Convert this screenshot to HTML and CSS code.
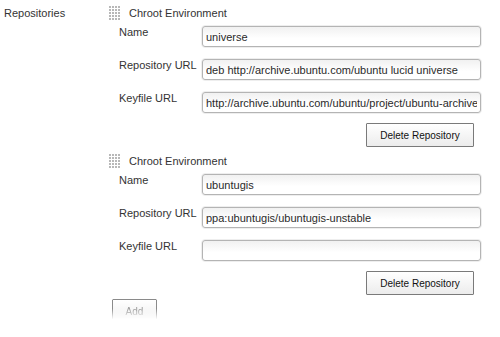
FILE: index.html
```
<!DOCTYPE html>
<html lang="en">
<head>
    <meta charset="UTF-8">
    <title>Repositories</title>
    <link rel="stylesheet" href="styles.css">
</head>
<body>
    <div class="setting">
        <div class="setting-name">Repositories</div>
        <div class="repo-list">

            <!-- first repository -->
            <div class="repo">
                <div class="repo-header">
                    <svg class="handle" width="11" height="14" viewBox="0 0 11 14">
                        <g fill="#b8b8b8">
                            <rect x="0" y="0" width="2" height="2"/><rect x="3" y="0" width="2" height="2"/><rect x="6" y="0" width="2" height="2"/><rect x="9" y="0" width="2" height="2"/>
                            <rect x="0" y="3" width="2" height="2"/><rect x="3" y="3" width="2" height="2"/><rect x="6" y="3" width="2" height="2"/><rect x="9" y="3" width="2" height="2"/>
                            <rect x="0" y="6" width="2" height="2"/><rect x="3" y="6" width="2" height="2"/><rect x="6" y="6" width="2" height="2"/><rect x="9" y="6" width="2" height="2"/>
                            <rect x="0" y="9" width="2" height="2"/><rect x="3" y="9" width="2" height="2"/><rect x="6" y="9" width="2" height="2"/><rect x="9" y="9" width="2" height="2"/>
                            <rect x="0" y="12" width="2" height="2"/><rect x="3" y="12" width="2" height="2"/><rect x="6" y="12" width="2" height="2"/><rect x="9" y="12" width="2" height="2"/>
                        </g>
                    </svg>
                    <span>Chroot Environment</span>
                </div>
                <div class="fields">
                    <label>Name</label>
                    <div class="field"><input type="text" value="universe"></div>
                    <label>Repository URL</label>
                    <div class="field"><input type="text" value="deb http://archive.ubuntu.com/ubuntu lucid universe"></div>
                    <label>Keyfile URL</label>
                    <div class="field"><input type="text" value="http://archive.ubuntu.com/ubuntu/project/ubuntu-archive-keyring.gpg"></div>
                </div>
                <div class="actions">
                    <button class="btn">Delete Repository</button>
                </div>
            </div>

            <!-- second repository -->
            <div class="repo">
                <div class="repo-header">
                    <svg class="handle" width="11" height="14" viewBox="0 0 11 14">
                        <g fill="#b8b8b8">
                            <rect x="0" y="0" width="2" height="2"/><rect x="3" y="0" width="2" height="2"/><rect x="6" y="0" width="2" height="2"/><rect x="9" y="0" width="2" height="2"/>
                            <rect x="0" y="3" width="2" height="2"/><rect x="3" y="3" width="2" height="2"/><rect x="6" y="3" width="2" height="2"/><rect x="9" y="3" width="2" height="2"/>
                            <rect x="0" y="6" width="2" height="2"/><rect x="3" y="6" width="2" height="2"/><rect x="6" y="6" width="2" height="2"/><rect x="9" y="6" width="2" height="2"/>
                            <rect x="0" y="9" width="2" height="2"/><rect x="3" y="9" width="2" height="2"/><rect x="6" y="9" width="2" height="2"/><rect x="9" y="9" width="2" height="2"/>
                            <rect x="0" y="12" width="2" height="2"/><rect x="3" y="12" width="2" height="2"/><rect x="6" y="12" width="2" height="2"/><rect x="9" y="12" width="2" height="2"/>
                        </g>
                    </svg>
                    <span>Chroot Environment</span>
                </div>
                <div class="fields">
                    <label>Name</label>
                    <div class="field"><input type="text" value="ubuntugis"></div>
                    <label>Repository URL</label>
                    <div class="field"><input type="text" value="ppa:ubuntugis/ubuntugis-unstable"></div>
                    <label>Keyfile URL</label>
                    <div class="field"><input type="text" value=""></div>
                </div>
                <div class="actions">
                    <button class="btn">Delete Repository</button>
                </div>
            </div>

            <button class="btn btn-add">Add</button>
        </div>
    </div>
</body>
</html>
```

FILE: styles.css
```
/* Global */
body {
    margin: 0;
    font-family: 'Liberation Sans', Arial, sans-serif;
    font-size: 11px;
    color: #333;
    background: #fff;
}

.setting {
    display: flex;
    padding-top: 3px;
}

.setting-name {
    width: 104px;
    padding-left: 4px;
    line-height: 20px;
}

.repo-list {
    width: 380px;
}

/* One repository block */
.repo {
    margin-bottom: 4px;
}

.repo-header {
    display: flex;
    align-items: center;
    height: 20px;
    margin-bottom: 2px;
}

.handle {
    margin-left: 1px;
    margin-right: 9px;
}

.fields {
    display: grid;
    grid-template-columns: 82px 281px;
    row-gap: 10px;
    margin-left: 11px;
}

.fields label {
    line-height: 14px;
    white-space: nowrap;
}

.field {
    border: 1px solid #eee;
    border-radius: 4px;
}

.field input {
    display: block;
    box-sizing: border-box;
    width: 100%;
    height: 21px;
    margin: 0;
    padding: 0 3px;
    border: 1px solid #b4b4b4;
    border-radius: 3px;
    background: linear-gradient(#f1f1f1, #fff 60%);
    font-family: 'Liberation Sans', Arial, sans-serif;
    font-size: 11px;
    color: #2a2a2a;
    outline: none;
}

.actions {
    display: flex;
    justify-content: flex-end;
    padding-right: 14px;
    margin-top: 9px;
}

.btn {
    width: 108px;
    height: 24px;
    padding: 0;
    border: 1px solid #7a7a7a;
    border-radius: 1px;
    background: linear-gradient(#fff, #ececec);
    font-family: 'Liberation Sans', Arial, sans-serif;
    font-size: 10px;
    color: #111;
}

.btn-add {
    display: block;
    width: 45px;
    height: 24px;
    margin: 4px 0 0 4px;
    border-color: #8a8a8a;
    color: #999;
    -webkit-mask-image: linear-gradient(#000 40%, transparent 85%);
    mask-image: linear-gradient(#000 40%, transparent 85%);
}
```
